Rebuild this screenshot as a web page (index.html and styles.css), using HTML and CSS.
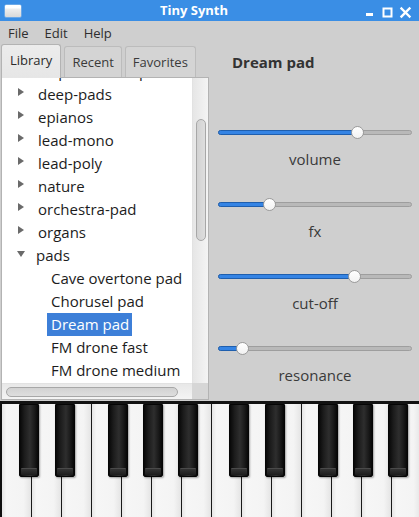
FILE: index.html
```html
<!DOCTYPE html>
<html>
<head>
<meta charset="utf-8">
<link rel="stylesheet" href="styles.css">
</head>
<body>
<div class="window">
  <div class="titlebar">
    <div class="app-icon"></div>
    <div class="title">Tiny Synth</div>
    <svg class="wbtns" width="56" height="21" viewBox="0 0 56 21">
      <rect x="3" y="13" width="7" height="3" fill="#fff"/>
      <rect x="20.5" y="8.5" width="8" height="8" fill="none" stroke="#fff" stroke-width="2"/>
      <path d="M38.5 8.5 L46.5 16.5 M46.5 8.5 L38.5 16.5" stroke="#fff" stroke-width="2.4" stroke-linecap="square"/>
    </svg>
  </div>
  <div class="menubar">
    <span>File</span><span>Edit</span><span>Help</span>
  </div>
  <div class="main">
    <div class="left">
      <div class="tabs">
        <div class="tab active">Library</div>
        <div class="tab">Recent</div>
        <div class="tab">Favorites</div>
      </div>
      <div class="treebox">
        <div class="tree-view">
          <ul class="tree">
            <li class="folder"><span class="exp closed"></span>chiptune-lead-pad</li>
            <li class="folder"><span class="exp closed"></span>deep-pads</li>
            <li class="folder"><span class="exp closed"></span>epianos</li>
            <li class="folder"><span class="exp closed"></span>lead-mono</li>
            <li class="folder"><span class="exp closed"></span>lead-poly</li>
            <li class="folder"><span class="exp closed"></span>nature</li>
            <li class="folder"><span class="exp closed"></span>orchestra-pad</li>
            <li class="folder"><span class="exp closed"></span>organs</li>
            <li class="folder"><span class="exp open"></span>pads</li>
            <li class="leaf"><span class="lbl">Cave overtone pad</span></li>
            <li class="leaf"><span class="lbl">Chorusel pad</span></li>
            <li class="leaf"><span class="lbl selected">Dream pad</span></li>
            <li class="leaf"><span class="lbl">FM drone fast</span></li>
            <li class="leaf"><span class="lbl">FM drone medium</span></li>
          </ul>
        </div>
        <div class="vscroll"><div class="vthumb"></div></div>
        <div class="hscroll"><div class="hthumb"></div></div>
        <div class="corner"></div>
      </div>
    </div>
    <div class="right">
      <div class="preset-name">Dream pad</div>
      <div class="control">
        <div class="slider" style="--v:0.737"><div class="track"></div><div class="fill"></div><div class="knob"></div></div>
        <div class="clabel">volume</div>
      </div>
      <div class="control">
        <div class="slider" style="--v:0.25"><div class="track"></div><div class="fill"></div><div class="knob"></div></div>
        <div class="clabel">fx</div>
      </div>
      <div class="control">
        <div class="slider" style="--v:0.72"><div class="track"></div><div class="fill"></div><div class="knob"></div></div>
        <div class="clabel">cut-off</div>
      </div>
      <div class="control">
        <div class="slider" style="--v:0.10"><div class="track"></div><div class="fill"></div><div class="knob"></div></div>
        <div class="clabel">resonance</div>
      </div>
    </div>
  </div>
  <div class="keyboard">
    <div class="whites">
      <div class="wk"></div><div class="wk"></div><div class="wk"></div><div class="wk"></div><div class="wk"></div><div class="wk"></div><div class="wk"></div>
      <div class="wk"></div><div class="wk"></div><div class="wk"></div><div class="wk"></div><div class="wk"></div><div class="wk"></div><div class="wk"></div>
    </div>
    <div class="bk b1"></div><div class="bk b2"></div><div class="bk b3"></div><div class="bk b4"></div><div class="bk b5"></div>
    <div class="bk b6"></div><div class="bk b7"></div><div class="bk b8"></div><div class="bk b9"></div><div class="bk b10"></div>
  </div>
</div>
</body>
</html>
```
FILE: styles.css
```css
* { box-sizing: border-box; }
html, body { margin: 0; padding: 0; }
body {
  width: 419px;
  height: 517px;
  overflow: hidden;
  background: #cfcfcf;
  font-family: "Open Sans", "Noto Sans", "DejaVu Sans", sans-serif;
  color: #2a2a2a;
}
.window {
  width: 419px;
  height: 517px;
  display: flex;
  flex-direction: column;
  background: #cfcfcf;
}

/* title bar */
.titlebar {
  height: 21px;
  background: #3a8ee5;
  display: flex;
  align-items: center;
  flex: none;
}
.app-icon {
  width: 16px;
  height: 12px;
  margin-left: 5px;
  margin-top: 1px;
  border-radius: 1px;
  background: linear-gradient(#ffffff 0, #ffffff 3px, #eeeeee 4px, #d9d9d9 100%);
  box-shadow: 0 0 0 0.5px #9cc1ea;
}
.title {
  flex: 1;
  text-align: center;
  color: #ffffff;
  font-weight: 700;
  font-size: 13px;
  line-height: 21px;
  padding-left: 4px;
}
.wbtns { flex: none; display: block; }

/* menu */
.menubar {
  height: 23px;
  display: flex;
  align-items: center;
  gap: 16px;
  padding-left: 8px;
  font-size: 13px;
  color: #2e2e2e;
  flex: none;
}

/* main */
.main {
  height: 357px;
  display: flex;
  flex: none;
}
.left {
  width: 210px;
  display: flex;
  flex-direction: column;
  padding-left: 1px;
}
.tabs {
  height: 33px;
  display: flex;
  align-items: flex-end;
  gap: 3px;
  flex: none;
}
.tab {
  height: 31px;
  padding: 0 7px;
  border: 1px solid #bcbcbc;
  border-bottom: none;
  border-radius: 3px 3px 0 0;
  background: #d4d4d4;
  font-size: 13px;
  line-height: 31px;
  color: #3a3a3a;
  margin-bottom: 0;
}
.tab.active {
  height: 34px;
  line-height: 30px;
  padding: 0 8px;
  background: linear-gradient(#ececec, #e6e6e6);
  border-color: #b3b3b3;
  color: #2a2a2a;
  margin-bottom: -1px;
  position: relative;
  z-index: 2;
}
.treebox {
  width: 208px;
  flex: 1;
  border: 1px solid #b3b3b3;
  background: #ffffff;
  display: grid;
  grid-template-columns: 1fr 16px;
  grid-template-rows: 1fr 16px;
  margin-bottom: 1px;
}
.tree-view {
  overflow: hidden;
  position: relative;
}
.tree {
  list-style: none;
  margin: -18px 0 0 0;
  padding: 0;
  font-size: 15px;
  color: #1c1c1c;
}
.tree li {
  height: 23px;
  line-height: 23px;
  white-space: nowrap;
  display: flex;
  align-items: center;
}
.folder { padding-left: 15px; }
.exp {
  width: 0;
  height: 0;
  display: inline-block;
  margin-right: 14px;
  margin-top: -5px;
}
.exp.closed {
  border-top: 4.5px solid transparent;
  border-bottom: 4.5px solid transparent;
  border-left: 6px solid #6a6a6a;
  margin-left: 1px;
}
.exp.open {
  border-left: 4.5px solid transparent;
  border-right: 4.5px solid transparent;
  border-top: 6px solid #6a6a6a;
  margin-right: 11px;
  margin-top: -3px;
}
.leaf { padding-left: 45px; }
.lbl {
  display: inline-block;
  padding: 0 3px 0 4px;
  height: 23px;
  line-height: 23px;
}
.lbl.selected {
  background: #3d7fd8;
  color: #ffffff;
}
.vscroll {
  background: linear-gradient(to right, #e6e6e6, #f4f4f4);
  border-left: 1px solid #e2e2e2;
  position: relative;
  padding: 41px 2px 0 2px;
}
.vthumb {
  width: 10px;
  height: 122px;
  margin-left: 1px;
  border: 1px solid #a7a7a7;
  border-radius: 5px;
  background: linear-gradient(to right, #d2d2d2, #dedede);
}
.hscroll {
  background: linear-gradient(#e8e8e8, #f4f4f4);
  border-top: 1px solid #e2e2e2;
  padding: 3px 0 0 4px;
}
.hthumb {
  width: 172px;
  height: 10px;
  border: 1px solid #a7a7a7;
  border-radius: 5px;
  background: linear-gradient(#d2d2d2, #dedede);
}
.corner { background: #d6d6d6; }

/* right */
.right {
  flex: 1;
  padding: 8px 7px 0 8px;
  display: flex;
  flex-direction: column;
}
.preset-name {
  font-size: 15px;
  font-weight: 700;
  line-height: 20px;
  color: #333333;
  margin-left: 14px;
  margin-bottom: 52px;
}
.control {
  display: flex;
  flex-direction: column;
  margin-bottom: 27px;
}
.slider {
  position: relative;
  height: 16px;
  margin-bottom: 9px;
}
.track {
  position: absolute;
  left: 0;
  right: 0;
  top: 6px;
  height: 5px;
  border-radius: 3px;
  border: 1px solid #9e9e9e;
  background: #b9b9b9;
}
.fill {
  position: absolute;
  left: 0;
  top: 6px;
  height: 5px;
  width: calc(var(--v) * (100% - 13px) + 7px);
  border-radius: 3px;
  border: 1px solid #1f5fae;
  background: #3584e4;
}
.knob {
  position: absolute;
  top: 1.5px;
  left: calc(var(--v) * (100% - 13px));
  width: 13px;
  height: 13px;
  border-radius: 50%;
  border: 1px solid #9b9b9b;
  background: linear-gradient(#ffffff, #f2f2f2);
}
.clabel {
  font-size: 15px;
  line-height: 20px;
  text-align: center;
  color: #3a3a3a;
}

/* keyboard */
.keyboard {
  height: 116px;
  flex: none;
  position: relative;
  background: #0f0f0f;
  border-top: 3px solid #121212;
  overflow: hidden;
}
.whites {
  display: flex;
  height: 100%;
  padding-left: 2px;
}
.wk {
  width: 30px;
  flex: none;
  height: 100%;
  border-right: 1.5px solid #1a1a1a;
  background: linear-gradient(to right, #e6e6e6 0, #f6f6f6 15%, #f4f4f4 75%, #e4e4e4 100%);
}
.bk {
  position: absolute;
  top: 0;
  width: 20px;
  height: 73px;
  border: 1.5px solid #050505;
  border-radius: 0 0 2px 2px;
  background: linear-gradient(to right, #080808 0, #1c1c1c 25%, #2e2e2e 55%, #1a1a1a 80%, #070707 100%);
  box-shadow: 1px 1px 2px rgba(0,0,0,0.35);
}
.bk::after {
  content: "";
  position: absolute;
  left: 1px;
  right: 1px;
  bottom: 1px;
  height: 6px;
  border-radius: 1px;
  background: linear-gradient(#333333, #1c1c1c);
  border-top: 1px solid #4a4a4a;
}
.b1 { left: 19px; }
.b2 { left: 55px; }
.b3 { left: 108px; }
.b4 { left: 143px; }
.b5 { left: 178px; }
.b6 { left: 229px; }
.b7 { left: 265px; }
.b8 { left: 318px; }
.b9 { left: 353px; }
.b10 { left: 388px; }
```
